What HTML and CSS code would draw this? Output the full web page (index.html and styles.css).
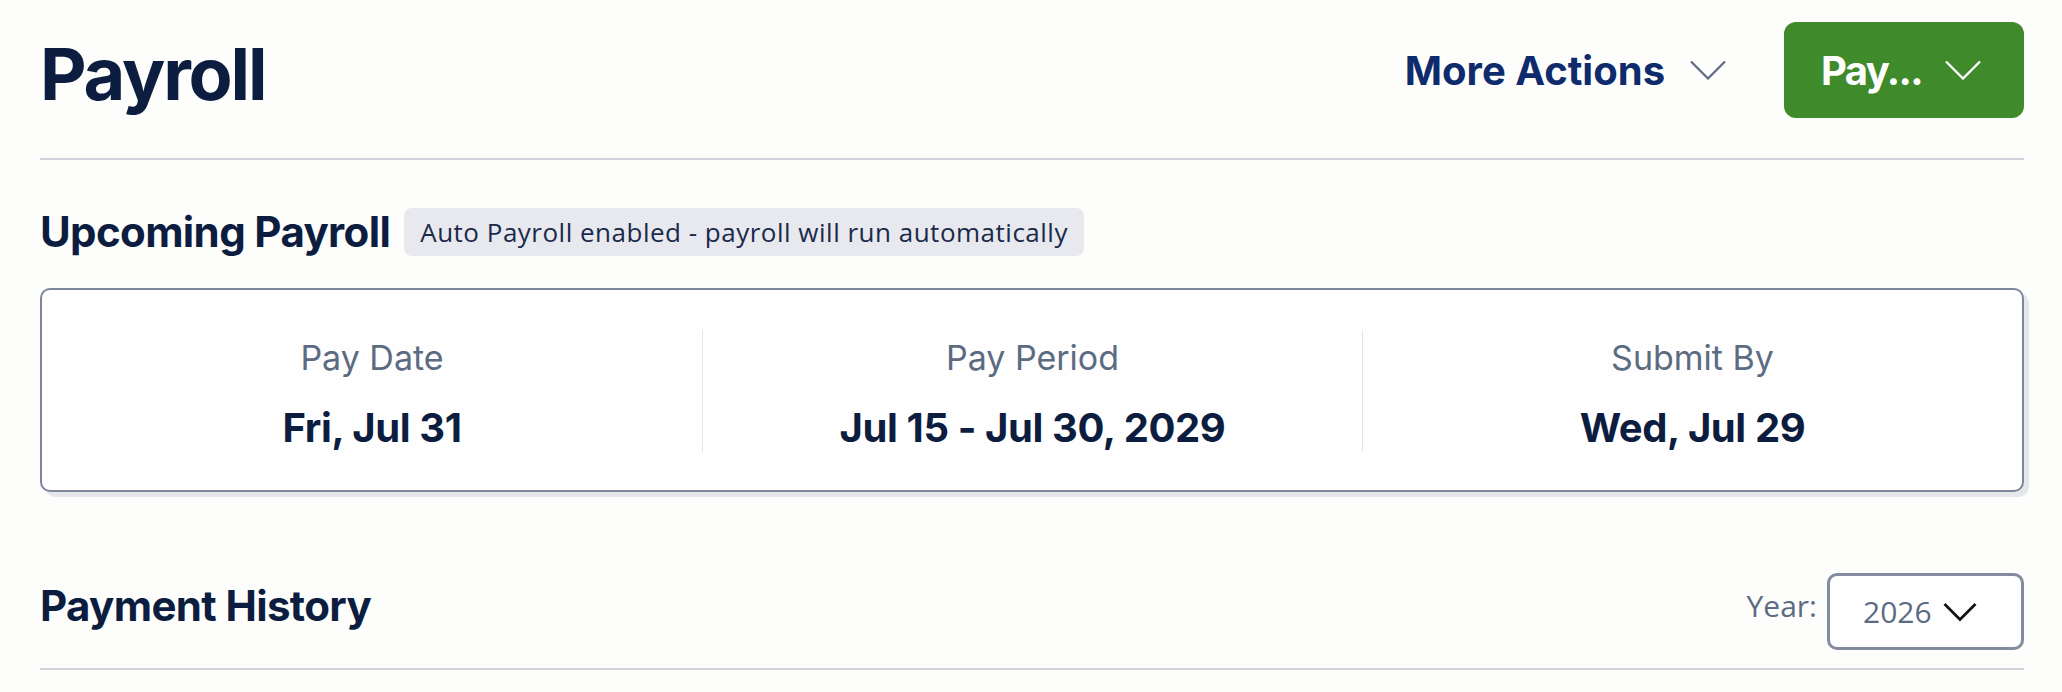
FILE: index.html
```html
<!DOCTYPE html>
<html lang="en">
<head>
<meta charset="utf-8">
<title>Payroll</title>
<link rel="stylesheet" href="styles.css">
</head>
<body>
<main class="page">
  <header class="page-header">
    <h1 class="page-title">Payroll</h1>
    <div class="actions">
      <button class="more-actions" type="button">
        <span>More Actions</span>
        <svg class="chev chev-muted" width="36" height="20" viewBox="0 0 36 20" aria-hidden="true"><polyline points="1,1.5 18,18.5 35,1.5" fill="none" stroke="currentColor" stroke-width="2.2"/></svg>
      </button>
      <button class="pay-button" type="button">
        <span>Pay...</span>
        <svg class="chev" width="36" height="20" viewBox="0 0 36 20" aria-hidden="true"><polyline points="1,1.5 18,18.5 35,1.5" fill="none" stroke="currentColor" stroke-width="2.4"/></svg>
      </button>
    </div>
  </header>

  <section class="upcoming">
    <div class="title-row">
      <h2 class="section-title">Upcoming Payroll</h2>
      <span class="badge">Auto Payroll enabled - payroll will run automatically</span>
    </div>
    <div class="card">
      <div class="stat">
        <div class="stat-label">Pay Date</div>
        <div class="stat-value">Fri, Jul 31</div>
      </div>
      <div class="stat">
        <div class="stat-label">Pay Period</div>
        <div class="stat-value">Jul 15 - Jul 30, 2029</div>
      </div>
      <div class="stat">
        <div class="stat-label">Submit By</div>
        <div class="stat-value">Wed, Jul 29</div>
      </div>
    </div>
  </section>

  <section class="history">
    <div class="history-header">
      <h2 class="section-title">Payment History</h2>
      <div class="year-filter">
        <span class="year-label">Year:</span>
        <div class="year-select" role="button">
          <span>2026</span>
          <svg class="chev chev-dark" width="34" height="20" viewBox="0 0 34 20" aria-hidden="true"><polyline points="1.5,2 17,17.5 32.5,2" fill="none" stroke="currentColor" stroke-width="2.8"/></svg>
        </div>
      </div>
    </div>
  </section>
</main>
</body>
</html>
```

FILE: styles.css
```css
html, body {
  margin: 0;
  background: #fdfdfc;
}

body {
  font-family: Inter, "Noto Sans", sans-serif;
  color: #0c1d40;
}

.page {
  padding: 22px 38px 0 40px;
}

/* Header */
.page-header {
  display: flex;
  justify-content: space-between;
  align-items: center;
  padding-bottom: 40px;
  border-bottom: 2px solid #d0d3dd;
}

.page-title {
  margin: 0;
  padding-top: 8px;
  font-size: 72px;
  line-height: 1;
  font-weight: 700;
  letter-spacing: -0.03em;
  color: #0c1d40;
}

.actions {
  display: flex;
  align-items: center;
  gap: 58px;
}

.more-actions {
  display: flex;
  align-items: center;
  gap: 25px;
  padding: 0;
  border: 0;
  background: none;
  font-family: Inter, "Noto Sans", sans-serif;
  font-size: 40px;
  font-weight: 700;
  letter-spacing: 0;
  color: #0e2b6c;
  cursor: pointer;
}

.chev {
  display: block;
  flex: none;
}

.chev-muted {
  color: #5d6a80;
}

.chev-dark {
  color: #111418;
}

.pay-button {
  display: flex;
  align-items: center;
  gap: 23px;
  height: 96px;
  padding: 0 43px 0 37px;
  border: 0;
  border-radius: 12px;
  background: #3f8a2b;
  color: #ffffff;
  font-family: Inter, "Noto Sans", sans-serif;
  font-size: 40px;
  font-weight: 700;
  letter-spacing: -0.04em;
  cursor: pointer;
}

/* Upcoming payroll */
.upcoming {
  padding-top: 48px;
}

.title-row {
  display: flex;
  align-items: center;
  gap: 14px;
}

.section-title {
  margin: 0;
  font-size: 42px;
  line-height: 48px;
  font-weight: 700;
  letter-spacing: -0.015em;
  color: #0c1d40;
}

.badge {
  display: flex;
  align-items: center;
  box-sizing: border-box;
  height: 48px;
  padding: 0 16px;
  border-radius: 8px;
  background: #e7e9ee;
  font-family: "Open Sans", "Noto Sans", sans-serif;
  font-size: 26px;
  letter-spacing: 0.5px;
  color: #1b2a4b;
  white-space: nowrap;
}

.card {
  margin-top: 32px;
  display: grid;
  grid-template-columns: repeat(3, 1fr);
  padding: 40px 0 38px;
  border: 2px solid #7e879a;
  border-radius: 10px;
  background: #fefefe;
  box-shadow: 5px 5px 0 #e5e7ec;
}

.stat {
  display: flex;
  flex-direction: column;
  align-items: center;
  gap: 26px;
  padding-top: 8px;
}

.stat + .stat {
  border-left: 1px solid #e3e5e9;
}

.stat-label {
  font-size: 34px;
  line-height: 40px;
  font-weight: 400;
  color: #5b6b82;
}

.stat-value {
  font-size: 40px;
  line-height: 48px;
  font-weight: 700;
  letter-spacing: -0.01em;
  color: #0c1d40;
}

/* Payment history */
.history-header {
  margin-top: 69px;
  display: flex;
  justify-content: space-between;
  align-items: center;
  padding-bottom: 18px;
  border-bottom: 2px solid #d0d3dd;
}

.year-filter {
  display: flex;
  align-items: center;
  gap: 10px;
}

.year-label {
  font-family: "Open Sans", "Noto Sans", sans-serif;
  font-size: 30px;
  line-height: 40px;
  color: #5b6b82;
}

.year-select {
  margin-top: 12px;
  display: flex;
  align-items: center;
  gap: 11px;
  box-sizing: border-box;
  width: 197px;
  height: 77px;
  padding: 0 39px 0 33px;
  border: 3px solid #838c9e;
  border-radius: 10px;
  background: #ffffff;
  font-family: "Open Sans", "Noto Sans", sans-serif;
  font-size: 30px;
  color: #5b6b82;
  cursor: pointer;
}
```
